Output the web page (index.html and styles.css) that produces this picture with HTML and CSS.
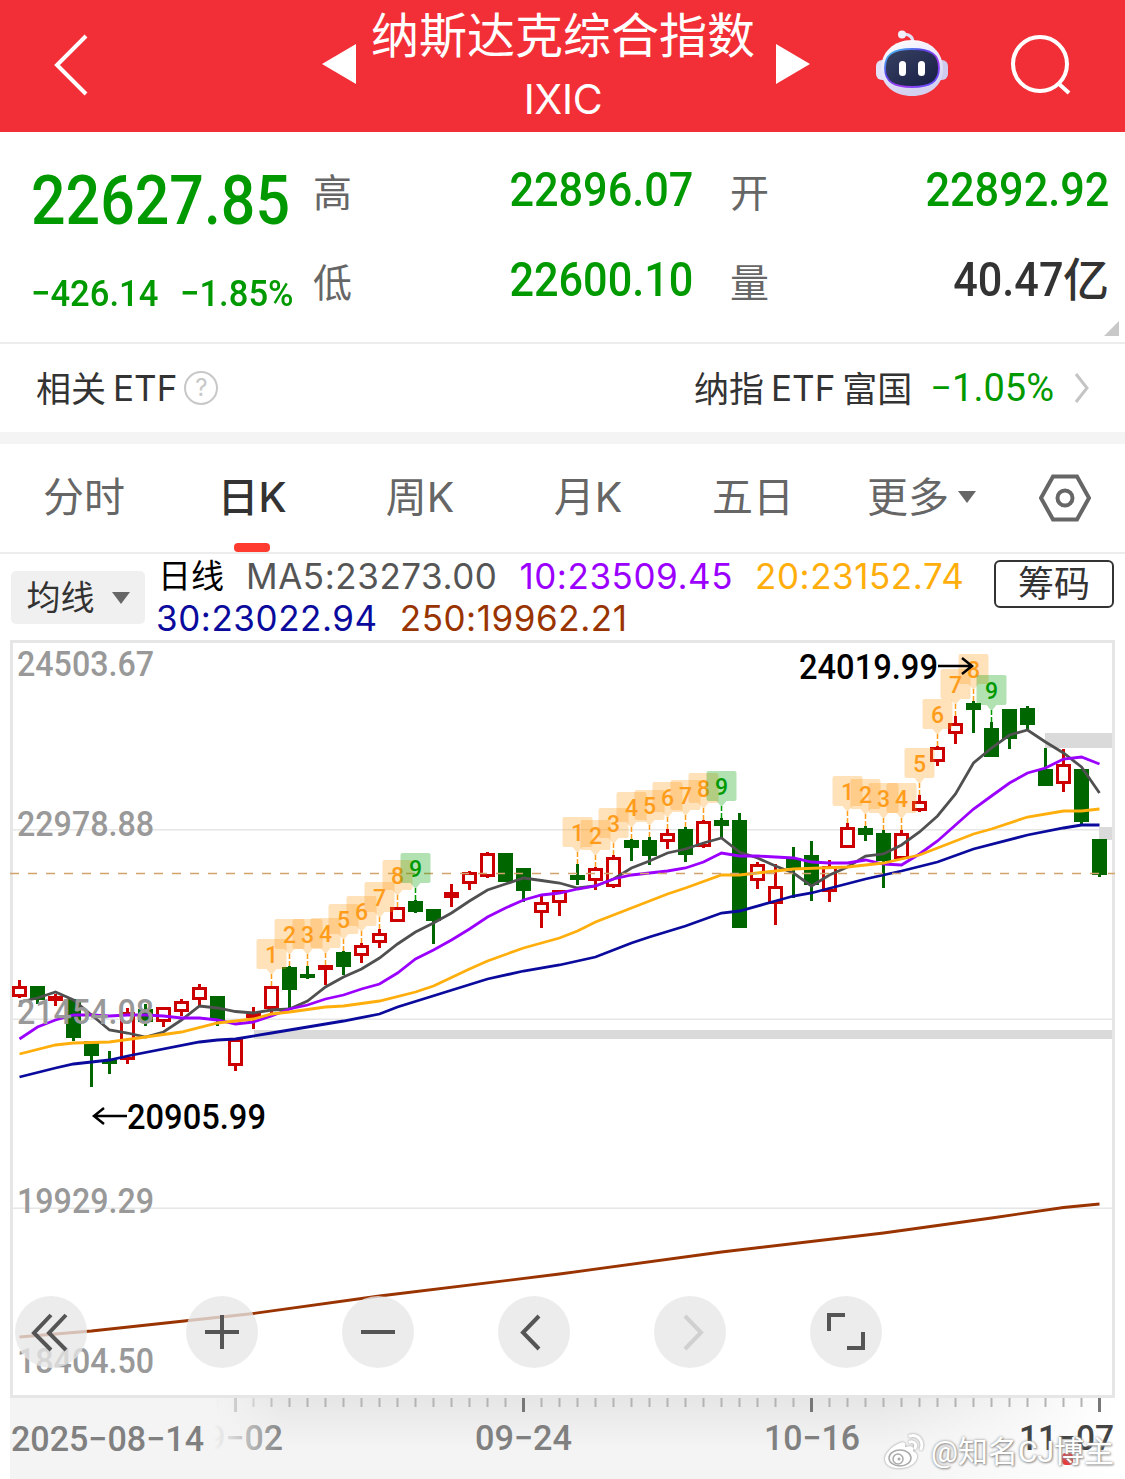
FILE: index.html
```
<!DOCTYPE html>
<html lang="zh-CN">
<head>
    <meta charset="UTF-8">
    <title>纳斯达克综合指数</title>
    <link rel="stylesheet" href="styles.css">
</head>
<body>
    <header class="header">
        <svg class="back" width="40" height="64" viewBox="0 0 40 64"><path d="M34 4L5 33L34 62"/></svg>
        <svg class="prev" width="34" height="40" viewBox="0 0 34 40"><path d="M0 20L34 0V40Z"/></svg>
        <div class="title">
            <h1>纳斯达克综合指数</h1>
            <p>IXIC</p>
        </div>
        <svg class="next" width="34" height="40" viewBox="0 0 34 40"><path d="M34 20L0 0V40Z"/></svg>
        <svg class="robot" width="72" height="68" viewBox="0 0 72 68">
            <defs>
                <linearGradient id="shell" x1="0" y1="0" x2="0.3" y2="1">
                    <stop offset="0" stop-color="#ffffff"/>
                    <stop offset="0.6" stop-color="#e6e3fa"/>
                    <stop offset="1" stop-color="#d3d0f0"/>
                </linearGradient>
                <linearGradient id="rim" x1="0" y1="0" x2="1" y2="1">
                    <stop offset="0" stop-color="#42d9f5"/>
                    <stop offset="0.35" stop-color="#5a48e8"/>
                    <stop offset="0.65" stop-color="#a03af0"/>
                    <stop offset="1" stop-color="#4a54ff"/>
                </linearGradient>
                <linearGradient id="face" x1="0" y1="0" x2="1" y2="1">
                    <stop offset="0" stop-color="#3a4262"/>
                    <stop offset="1" stop-color="#151d45"/>
                </linearGradient>
            </defs>
            <path d="M27 5Q37 5 37 14" fill="none" stroke="#e3dff5" stroke-width="3"/>
            <circle cx="26" cy="5.500" r="4" fill="#f2effc"/>
            <rect x="0" y="31" width="14" height="20" rx="6" fill="#e4e1f7"/>
            <rect x="58" y="31" width="14" height="20" rx="6" fill="#cfcbee"/>
            <path d="M36 11C54 11 67 23 67 40C67 57 53 67 36 67C19 67 5 57 5 40C5 23 18 11 36 11Z" fill="url(#shell)"/>
            <path d="M36 20C56 20 63 26 63 39C63 53 54 58 36 58C18 58 9 53 9 39C9 26 16 20 36 20Z" fill="url(#face)" stroke="url(#rim)" stroke-width="1.800"/>
            <rect x="23" y="32" width="7" height="15" rx="3.5" fill="#fff"/>
            <rect x="42" y="32" width="7" height="15" rx="3.5" fill="#fff"/>
        </svg>
        <svg class="search" width="64" height="62" viewBox="0 0 64 62"><circle cx="30" cy="29" r="27"/><path d="M48 48L59 58"/></svg>
    </header>

    <section class="quote">
        <div class="last">
            <div class="price"><span class="num">22627.85</span></div>
            <div class="change"><span class="num">−426.14</span><span class="num">−1.85%</span></div>
        </div>
        <div class="label">高</div>
        <div class="value"><span class="num">22896.07</span></div>
        <div class="label open">开</div>
        <div class="value"><span class="num">22892.92</span></div>
        <div class="label">低</div>
        <div class="value"><span class="num">22600.10</span></div>
        <div class="label open">量</div>
        <div class="value volume"><span class="num">40.47</span><span class="unit">亿</span></div>
        <i class="corner"></i>
    </section>

    <section class="etf">
        <span class="cn">相关</span><span class="latin">ETF</span>
        <i class="help">?</i>
        <span class="cn fund">纳指</span><span class="latin">ETF</span><span class="cn">富国</span>
        <span class="num pct">−1.05%</span>
        <svg width="16" height="32" viewBox="0 0 16 32"><path d="M2 2L13 16L2 30"/></svg>
    </section>

    <nav class="tabs">
        <a>分时</a>
        <a class="active">日K</a>
        <a>周K</a>
        <a>月K</a>
        <a class="days">五日</a>
        <a class="more">更多<i class="caret"></i></a>
        <a class="settings"><svg width="52" height="48" viewBox="0 0 52 48"><path d="M14 2.5H38L50 24L38 45.5H14L2 24Z"/><circle cx="26" cy="24" r="7.5"/></svg></a>
    </nav>

    <section class="indicator">
        <button class="ma-select">均线<i class="caret"></i></button>
        <div class="ma">
            <div class="row"><b>日线</b><span class="ma5">MA5:23273.00</span><span class="ma10">10:23509.45</span><span class="ma20">20:23152.74</span></div>
            <div class="row"><span class="ma30">30:23022.94</span><span class="ma250">250:19962.21</span></div>
        </div>
        <button class="chips">筹码</button>
    </section>

    <main class="chart">
        <svg id="kline" width="1125" height="839" viewBox="0 640 1125 839"></svg>
        <div class="tools">
            <button><svg viewBox="0 0 72 72"><path d="M36 19L19 37L36 54M51 19L34 37L51 54"/></svg></button>
            <button><svg viewBox="0 0 72 72"><path d="M36 19V53M19 36H53"/></svg></button>
            <button><svg viewBox="0 0 72 72"><path d="M19 36H53"/></svg></button>
            <button><svg viewBox="0 0 72 72"><path d="M41 20L25 36.500L41 53"/></svg></button>
            <button class="off"><svg viewBox="0 0 72 72"><path d="M31 20L47 36.500L31 53"/></svg></button>
            <button><svg viewBox="0 0 72 72"><path d="M19 35V19H35M53 36V52H37"/></svg></button>
        </div>
        <div class="watermark">
            <svg width="42" height="38" viewBox="0 0 42 38">
                <path d="M17 10C9 13 1 21 2 27C3 34 12 36 19 35C29 34 35 28 34 22C33 19 31 19 30 18C32 14 28 12 22 14C23 10 21 8 17 10Z" fill="#fff"/>
                <ellipse cx="17" cy="25" rx="11" ry="8" fill="none" stroke="#aaa" stroke-width="1.500"/>
                <circle cx="15" cy="26" r="5" fill="none" stroke="#aaa" stroke-width="1.500"/>
                <circle cx="16" cy="26" r="1.500" fill="#aaa"/>
                <path d="M27 3C35 1 41 8 38 16M27 9C31 8 34 11 32 15" fill="none" stroke="#fff" stroke-width="3" stroke-linecap="round"/>
            </svg>
            <span>@知名CJ博主</span>
        </div>
    </main>
    <script src="chart.js"></script>
</body>
</html>
```
FILE: styles.css
```
* {
    box-sizing: border-box;
}

body {
    margin: 0;
    width: 1125px;
    background: #fff;
    color: #333;
    font-family: Inter, "Noto Sans CJK SC", sans-serif;
}

button {
    padding: 0;
    border: 0;
    font: inherit;
    color: inherit;
}

.num {
    display: inline-block;
    font-family: Roboto, sans-serif;
    font-weight: 500;
    white-space: nowrap;
}

.caret {
    border: 9px solid transparent;
    border-top: 12px solid #666;
    border-bottom: 0;
}

/* header */
.header {
    display: flex;
    align-items: flex-start;
    height: 132px;
    background: #f22f37;
    color: #fff;
}

.header svg {
    flex: none;
}

.back {
    margin: 32px 0 0 52px;
    fill: none;
    stroke: #fff;
    stroke-width: 4;
}

.prev,
.next {
    margin-top: 44px;
    fill: #fff;
}

.prev {
    margin-left: 230px;
}

.title {
    width: 420px;
    padding-right: 6px;
    text-align: center;
}

.title h1 {
    margin: 0;
    font-size: 48px;
    font-weight: 400;
    line-height: 72px;
}

.title p {
    margin: 2px 0 0;
    font-size: 41px;
    line-height: 50px;
    letter-spacing: -0.3px;
}

.robot {
    margin: 29px 0 0 66px;
}

.search {
    margin: 35px 0 0 62px;
    fill: none;
    stroke: #fff;
    stroke-width: 4;
}

/* quote */
.quote {
    position: relative;
    display: grid;
    grid-template-columns: 313px 50px 330px 95px 321px;
    grid-template-rows: 90px 90px;
    align-items: center;
    height: 212px;
    padding-top: 14px;
    border-bottom: 2px solid #ececec;
    color: #009a00;
}

.last {
    grid-row: span 2;
    align-self: start;
    padding-left: 31px;
}

.price {
    height: 108px;
    font-size: 68px;
    line-height: 106px;
}

.price .num {
    transform: scaleX(0.895);
    transform-origin: left;
}

.change {
    display: flex;
    gap: 20px;
    font-size: 37px;
    line-height: 80px;
}

.change .num {
    transform: scaleX(0.935);
    transform-origin: left;
}

.change .num + .num {
    margin-left: -7px;
}

.label {
    margin-top: -3px;
    font-size: 39px;
    color: #666;
}

.label.open {
    padding-left: 37px;
}

.value {
    margin-top: -4px;
    font-size: 48px;
    line-height: 80px;
    text-align: right;
}

.value .num {
    transform: scaleX(0.9);
    transform-origin: right;
}

.volume {
    color: #333;
}

.unit {
    font-size: 46px;
    font-weight: 500;
}

.corner {
    position: absolute;
    right: 6px;
    bottom: 6px;
    border-left: 15px solid transparent;
    border-bottom: 15px solid #c8c8c8;
}

/* related etf */
.etf {
    display: flex;
    align-items: center;
    height: 100px;
    padding: 0 35px 0 36px;
    border-bottom: 12px solid #f4f4f4;
    font-size: 35px;
}

.cn {
    margin-top: -4px;
}

.latin {
    margin: 0 7px;
}

.help {
    width: 34px;
    height: 34px;
    border: 2px solid #c8c8c8;
    border-radius: 50%;
    font: 24px/30px Inter, sans-serif;
    text-align: center;
    color: #c8c8c8;
}

.fund {
    margin-left: auto;
}

.pct {
    margin-left: 18px;
    font-size: 38px;
    font-weight: 400;
    color: #009a00;
}

.etf svg {
    margin-left: 20px;
    fill: none;
    stroke: #c4c4c4;
    stroke-width: 3;
}

/* period tabs */
.tabs {
    display: flex;
    height: 110px;
    border-bottom: 2px solid #ececec;
    font-size: 41px;
    line-height: 106px;
    color: #666;
}

.tabs a {
    position: relative;
    display: flex;
    align-items: center;
    justify-content: center;
    width: 168px;
    padding-bottom: 3px;
}

.tabs .days {
    padding-right: 6px;
}

.tabs .more {
    padding-right: 9px;
}

.tabs .caret {
    margin: 0 -4px 0 9px;
}

.tabs .active {
    font-weight: 500;
    color: #333;
}

.tabs .active::after {
    content: "";
    position: absolute;
    bottom: 0;
    width: 36px;
    height: 9px;
    border-radius: 4px;
    background: #ff3b30;
}

.tabs .settings {
    width: 114px;
    padding-bottom: 0;
}

.tabs svg {
    fill: none;
    stroke: #666;
    stroke-width: 4;
}

/* moving averages */
.indicator {
    display: flex;
    align-items: flex-start;
    height: 86px;
    padding: 0 11px;
}

.ma-select {
    display: flex;
    align-items: center;
    justify-content: center;
    gap: 17px;
    width: 134px;
    height: 53px;
    margin-top: 17px;
    border-radius: 5px;
    background: #f0f0f0;
    font-size: 34px;
    line-height: 50px;
}

.ma {
    flex: 1;
    padding: 1px 0 0 11px;
    font-size: 35px;
    line-height: 42px;
}

.row {
    display: flex;
    gap: 22px;
    height: 42px;
    white-space: nowrap;
    letter-spacing: 0.55px;
}

.row b {
    margin-left: 2px;
    font-size: 33px;
    font-weight: 400;
    letter-spacing: 0;
    color: #000;
}

.ma5 { color: #555; }
.ma10 { color: #9b00ff; }
.ma20 { color: #ffae0c; }
.ma30 { color: #0a0a9c; }
.ma250 { color: #993300; }

.chips {
    width: 120px;
    height: 48px;
    margin-top: 6px;
    border: 2px solid #333;
    border-radius: 6px;
    background: #fff;
    font-size: 36px;
    line-height: 42px;
}

/* chart */
.chart {
    position: relative;
    height: 839px;
}

.chart > svg {
    display: block;
}

#kline text {
    font-family: Roboto, sans-serif;
    font-weight: 500;
}

.tools {
    position: absolute;
    left: 15px;
    top: 656px;
    display: flex;
    gap: 84px;
}

.tools button {
    width: 72px;
    height: 72px;
    border-radius: 50%;
    background: rgba(231, 231, 231, 0.78);
}

.tools button:first-child {
    margin-right: 15px;
}

.tools svg {
    display: block;
    fill: none;
    stroke: #555;
    stroke-width: 4;
}

.tools .off svg {
    stroke: #d0d0d0;
}

.watermark {
    position: absolute;
    right: 11px;
    bottom: 6px;
    display: flex;
    align-items: center;
    gap: 6px;
    height: 42px;
    font: 30px/42px Roboto, "Noto Sans CJK SC", sans-serif;
    color: #fff;
    white-space: nowrap;
    text-shadow: 0 0 3px #888, 1px 1px 2px #999;
}

.watermark svg {
    filter: drop-shadow(0 0 1px #888);
}
```
FILE: chart.js
```
const GREEN = '#006600';
const RED = '#cc0000';

const x = i => 19.5 + i * 18;

// direction, high, body top, body bottom, low
const candles = [
    ['r', 980, 986, 997, 998], ['g', 986, 986, 1000, 1004], ['r', 994, 996, 1001, 1006],
    ['g', 999, 999, 1038, 1041], ['g', 1041, 1041, 1056, 1087], ['g', 1051, 1060, 1064, 1074],
    ['r', 1008, 1012, 1060, 1064], ['g', 1004, 1009, 1022, 1026], ['r', 1007, 1007, 1022, 1027],
    ['r', 999, 1001, 1012, 1016], ['r', 984, 987, 1000, 1007], ['g', 996, 996, 1020, 1026],
    ['r', 1039, 1039, 1066, 1071], ['r', 1007, 1012, 1018, 1029], ['r', 986, 986, 1009, 1016],
    ['g', 966, 967, 990, 1008], ['g', 966, 974, 978, 979], ['r', 965, 965, 970, 985],
    ['g', 951, 952, 967, 975], ['r', 943, 945, 956, 963], ['r', 929, 933, 943, 948],
    ['r', 907, 907, 922, 922], ['g', 900, 901, 912, 913], ['g', 909, 909, 921, 944],
    ['r', 884, 892, 898, 907], ['r', 871, 872, 884, 890], ['r', 852, 853, 877, 878],
    ['g', 853, 853, 882, 882], ['g', 868, 868, 891, 902], ['r', 896, 902, 913, 928],
    ['r', 890, 890, 903, 916], ['g', 864, 875, 880, 885], ['r', 867, 868, 881, 890],
    ['r', 855, 857, 887, 888], ['g', 839, 840, 848, 861], ['g', 837, 840, 856, 865],
    ['r', 829, 833, 842, 849], ['g', 827, 829, 855, 862], ['r', 820, 821, 847, 848],
    ['g', 818, 820, 826, 838], ['g', 813, 820, 928, 928], ['r', 862, 864, 881, 889],
    ['r', 864, 886, 904, 925], ['g', 847, 858, 868, 898], ['g', 841, 855, 885, 901],
    ['r', 860, 866, 892, 902], ['r', 823, 827, 848, 848], ['g', 826, 828, 835, 841],
    ['g', 830, 833, 861, 888], ['r', 830, 833, 859, 859], ['r', 795, 801, 811, 812],
    ['r', 746, 747, 762, 766], ['r', 716, 723, 734, 744], ['g', 701, 703, 710, 733],
    ['g', 722, 728, 757, 757], ['g', 709, 709, 739, 749], ['g', 706, 708, 725, 730],
    ['g', 748, 769, 786, 786], ['r', 749, 764, 784, 792], ['g', 769, 769, 822, 824],
    ['g', 839, 839, 875, 877]
];

const ma5 = [1002, 998, 992, 1000, 1015, 1030, 1033, 1037, 1032, 1020, 1006, 1008, 1011.5, 1013,
    1010, 1009, 1001, 987, 977, 969, 958, 944, 932, 923, 913, 901, 890, 884, 878, 880.5, 883, 888,
    886, 879, 868, 861, 853, 849, 843, 838, 852, 858, 866, 873, 886, 875, 867, 856, 854, 845, 832,
    816, 794, 763, 748, 735, 730, 742, 753, 767, 793];

const ma10 = [1039, 1027, 1020, 1015, 1015, 1016, 1015, 1015, 1016, 1018, 1018, 1020, 1024, 1022,
    1016, 1009, 1005, 999, 995, 989, 984, 973, 959, 950, 940, 929, 917, 908, 900, 895, 893, 889,
    886, 879, 875, 873, 871, 868, 862, 853, 856, 856, 857, 858, 862, 863, 863, 860, 864, 865, 854,
    841, 825, 809, 796, 783, 773, 768, 759, 757, 764];

// the slower averages are kept as [index, y] turning points
const ma20 = [[0, 1054], [2, 1045], [3, 1043], [5, 1042], [7, 1037], [9, 1032], [11, 1023],
    [13, 1019], [14, 1014], [15, 1012], [17, 1007], [18, 1006], [20, 1001], [22, 992], [23, 986],
    [25, 969], [26, 961], [28, 948], [30, 938], [31, 931], [32, 922], [34, 908], [36, 894],
    [37, 888], [39, 875], [40, 875], [42, 871], [43, 869], [46, 867], [48, 863], [49, 859],
    [50, 855], [51, 848], [53, 834], [54, 829], [56, 817], [58, 811], [59, 811], [60, 809]];

const ma30 = [[0, 1077], [2, 1068], [3, 1064], [5, 1060], [6, 1056], [10, 1042], [11, 1040],
    [12, 1039], [14, 1033], [18, 1021], [20, 1014], [21, 1007], [26, 979], [28, 971], [30, 965],
    [32, 957], [34, 943], [35, 937], [37, 926], [39, 913], [40, 911], [42, 901], [43, 896],
    [44, 893], [47, 879], [49, 871], [51, 862], [53, 849], [56, 835], [58, 828], [59, 825], [60, 825]];

const ma250 = [[0, 1337], [4, 1331], [13, 1313.5], [20, 1296], [30, 1274], [39, 1252], [48, 1233],
    [54, 1218], [58, 1207.5], [60, 1204]];

// first candle of every 1-9 count
const counts = [14, 31, 46];

function text(str, left, base, width, fill, size = 35) {
    return `<text x="${left}" y="${base}" textLength="${width}" lengthAdjust="spacingAndGlyphs" font-size="${size}" fill="${fill}">${str}</text>`;
}

function rect(left, top, w, h, fill) {
    return `<rect x="${left}" y="${top}" width="${w}" height="${h}" fill="${fill}"/>`;
}

function line(points, color) {
    const list = points.map((p, i) => Array.isArray(p) ? `${x(p[0])},${p[1]}` : `${x(i)},${p}`);
    return `<polyline points="${list.join(' ')}" fill="none" stroke="${color}" stroke-width="2.8"/>`;
}

function candle([dir, high, top, bottom, low], i) {
    const c = x(i);
    const color = dir === 'r' ? RED : GREEN;
    const h = bottom - top;
    let out = rect(c - 1.5, high, 3, top - high, color) + rect(c - 1.5, bottom, 3, low - bottom, color);
    if (dir === 'g' || h < 6) {
        return out + rect(c - 7.5, top, 15, h, color);
    }
    return out + `<rect x="${c - 6}" y="${top + 1.5}" width="12" height="${h - 3}" fill="#fff" stroke="${color}" stroke-width="3"/>`;
}

function flag(i, n) {
    const c = x(i);
    const high = candles[i][1];
    const top = high - 47;
    const color = n === 9 ? '#009a00' : '#ff9c1a';
    return `<path d="M${c - 13} ${top}h26q2 0 2 2v26q0 2 -2 2h-8l-5 6l-5 -6h-8q-2 0 -2 -2v-26q0 -2 2 -2z" fill="${color}" opacity="0.3"/>
        <path d="M${c} ${top + 35}V${high}" stroke="${color}" stroke-width="1.5" stroke-dasharray="5 2"/>
        <text x="${c}" y="${top + 24}" text-anchor="middle" font-size="23" fill="${color}">${n}</text>`;
}

function axis() {
    let out = `<defs>
        <linearGradient id="axisTop" x1="0" y1="0" x2="0" y2="1"><stop offset="0" stop-color="#e6e6e6"/><stop offset="1" stop-color="#f4f4f4"/></linearGradient>
        <linearGradient id="fade"><stop offset="0.74" stop-color="#f4f4f4"/><stop offset="1" stop-color="#f4f4f4" stop-opacity="0"/></linearGradient>
        <linearGradient id="fadeRight"><stop offset="0" stop-color="#fff" stop-opacity="0"/><stop offset="1" stop-color="#fff"/></linearGradient>
    </defs>`;
    out += rect(10, 1398, 1105, 81, '#f4f4f4') + rect(10, 1398, 1105, 50, 'url(#axisTop)');
    out += rect(880, 1398, 235, 81, 'url(#fadeRight)');
    for (let i = 11; i <= 60; i++) {
        const major = (i - 12) % 16 === 0;
        out += rect(x(i) - (major ? 1.5 : 1), 1398, major ? 3 : 2, major ? 14 : 9, major ? '#777' : '#b4b4b4');
    }
    out += text('09−02', 187, 1450, 96, '#808080');
    out += rect(10, 1398, 275, 81, 'url(#fade)');
    out += text('2025−08−14', 11, 1451, 193, '#808080');
    out += text('09−24', 475, 1450, 97, '#808080');
    out += text('10−16', 764, 1450, 96, '#808080');
    out += '<rect x="1062" y="1453" width="11" height="12" rx="4" fill="#e83b3b"/>';
    out += text('11−07', 1019, 1450, 95, '#444');
    return out;
}

let out = '';
[829, 1018.5, 1207.5].forEach(y => out += rect(12, y, 1100, 1.5, '#e6e6e6'));
out += rect(254, 1030, 859, 9, '#dadada') + rect(1045, 733, 68, 15, '#dadada') + rect(1099, 827, 14, 13, '#dadada');
out += '<rect x="11.5" y="641.5" width="1102" height="755" fill="none" stroke="#e6e6e6" stroke-width="3"/>';
out += candles.map(candle).join('');
out += line(ma5, '#505050') + line(ma10, '#9b00ff') + line(ma20, '#ffae0c') + line(ma30, '#0a0a9c') + line(ma250, '#993300');
out += '<path d="M10 873.5H1115" stroke="#d2a46c" stroke-width="1.5" stroke-dasharray="9 9"/>';
counts.forEach(start => {
    for (let n = 1; n <= 9; n++) {
        out += flag(start + n - 1, n);
    }
});
[['24503.67', 676], ['22978.88', 835.5], ['21454.08', 1024], ['19929.29', 1213], ['18404.50', 1372.5]]
    .forEach(([label, y]) => out += text(label, 17, y, 137, '#999'));
out += text('24019.99', 799, 679, 139, '#000') + text('20905.99', 127, 1129, 139, '#000');
out += '<path d="M938 666H972M962 658L972 666L962 674" fill="none" stroke="#000" stroke-width="2.5"/>';
out += '<path d="M127 1116H94M104 1108L94 1116L104 1124" fill="none" stroke="#000" stroke-width="2.5"/>';
out += axis();

document.getElementById('kline').innerHTML = out;
```
